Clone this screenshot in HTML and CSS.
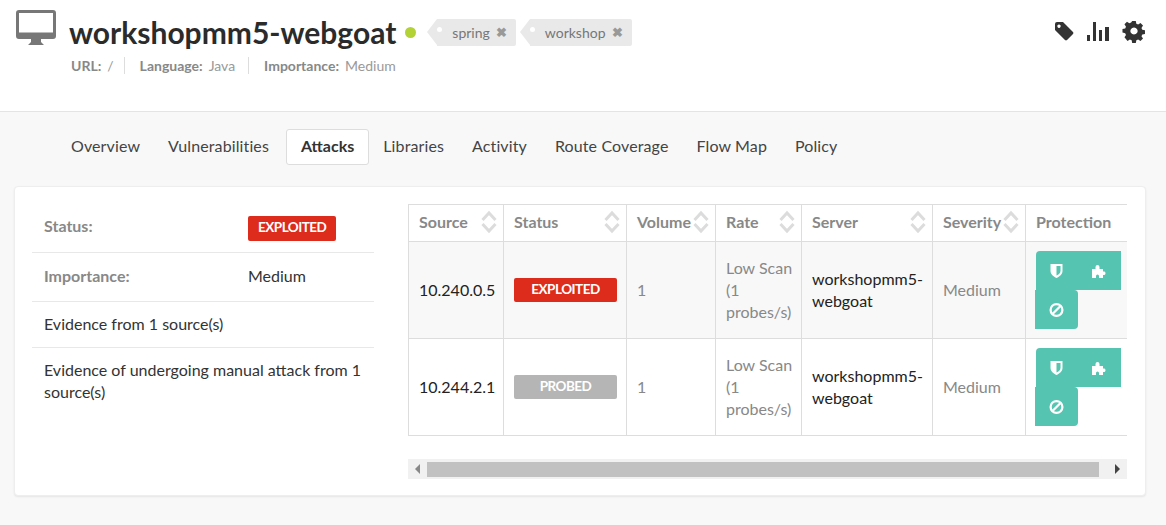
FILE: index.html
```html
<!DOCTYPE html>
<html lang="en">
<head>
<meta charset="UTF-8" />
<meta name="viewport" content="width=device-width, initial-scale=1" />
<title>workshopmm5-webgoat</title>
<link rel="stylesheet" href="styles.css">
</head>
<body>

<svg width="0" height="0" class="defs">
  <defs>
    <symbol id="sort" viewBox="0 0 16 24">
      <path d="M1.5 10 8 3l6.500 7" fill="none" stroke="#dcdcdc" stroke-width="3"/>
      <path d="M1.500 14 8 21l6.500-7" fill="none" stroke="#dcdcdc" stroke-width="3"/>
    </symbol>
    <symbol id="shield" viewBox="0 0 14 16">
      <path d="M1 1h12v7c0 3.500-3 5.500-6 7-3-1.500-6-3.500-6-7z" fill="#fff"/>
      <path d="M7 3h4v5c0 2-2 3.500-4 4.500z" fill="#55c4b0"/>
    </symbol>
    <symbol id="puzzle" viewBox="0 0 15 14">
      <path d="M0 5h3.500V3a2 2 0 0 1 4 0v2H11v2.500h1.500a2 2 0 0 1 0 3.500H11v3H7V12a1.500 1.500 0 0 0-3 0v2H0z" fill="#fff"/>
    </symbol>
    <symbol id="ban" viewBox="0 0 16 16">
      <circle cx="8" cy="8" r="6.300" fill="none" stroke="#fff" stroke-width="2.400"/>
      <path d="M4 12 12 4" stroke="#fff" stroke-width="2.400"/>
    </symbol>
  </defs>
</svg>

<header class="app-header">
  <div class="app-title">
    <svg class="monitor" viewBox="0 0 40 36" width="40" height="36">
      <path d="M3 0h34a3 3 0 0 1 3 3v23a3 3 0 0 1-3 3H25v3l3 3H12l3-3v-3H3a3 3 0 0 1-3-3V3a3 3 0 0 1 3-3z" fill="#777"/>
      <rect x="3" y="3" width="34" height="19.500" fill="#fff"/>
    </svg>
    <div>
      <div class="title-row">
        <h1>workshopmm5-webgoat</h1>
        <span class="dot"></span>
        <span class="tag">spring <b>&#10006;</b></span>
        <span class="tag">workshop <b>&#10006;</b></span>
      </div>
      <div class="meta">
        <span><b>URL:</b>/</span>
        <span><b>Language:</b>Java</span>
        <span><b>Importance:</b>Medium</span>
      </div>
    </div>
  </div>
  <div class="header-icons">
    <svg viewBox="0 0 20 20" width="20" height="20"><path d="M1 3a2 2 0 0 1 2-2h6l10 10a1.500 1.500 0 0 1 0 2l-6 6a1.500 1.500 0 0 1-2 0L1 9zm4 .500a1.700 1.700 0 1 0 .01 0z" fill="#333" fill-rule="evenodd"/></svg>
    <svg viewBox="0 0 22 22" width="22" height="22"><path d="M0 15h3v6H0zM6 2h3v19H6zM12 10h3v11h-3zM18 7h4v14h-4z" fill="#333"/></svg>
    <svg viewBox="0 0 24 24" width="24" height="24"><path d="M10 1h4l.6 3 2 .9 2.600-1.700 2.800 2.800-1.700 2.600.9 2 3 .6v4l-3 .6-.9 2 1.700 2.600-2.800 2.800-2.600-1.700-2 .9-.6 3h-4l-.6-3-2-.9-2.600 1.700L1.400 19l1.700-2.600-.9-2-3-.6v-4l3-.6.9-2L1.400 4.600l2.800-2.800 2.600 1.700 2-.9zM12 8a4 4 0 1 0 .01 0z" fill="#333" fill-rule="evenodd" transform="translate(1.200 1.200) scale(.9)"/></svg>
  </div>
</header>

<nav class="tabs">
  <a>Overview</a>
  <a>Vulnerabilities</a>
  <a class="active">Attacks</a>
  <a>Libraries</a>
  <a>Activity</a>
  <a>Route Coverage</a>
  <a>Flow Map</a>
  <a>Policy</a>
</nav>

<main class="card">
  <section class="summary">
    <div class="summary-row row-status"><b>Status:</b><span class="badge red">EXPLOITED</span></div>
    <div class="summary-row row-importance"><b>Importance:</b><span>Medium</span></div>
    <div class="summary-row row-text">Evidence from 1 source(s)</div>
    <div class="summary-row row-text last">Evidence of undergoing manual attack from 1 source(s)</div>
  </section>

  <section class="attacks">
    <div class="table-wrap">
      <table>
        <colgroup>
          <col class="c1"><col class="c2"><col class="c3"><col class="c4"><col class="c5"><col class="c6"><col class="c7">
        </colgroup>
        <thead>
          <tr>
            <th><div class="th-in">Source<svg><use href="#sort"/></svg></div></th>
            <th><div class="th-in">Status<svg><use href="#sort"/></svg></div></th>
            <th><div class="th-in">Volume<svg><use href="#sort"/></svg></div></th>
            <th><div class="th-in">Rate<svg><use href="#sort"/></svg></div></th>
            <th><div class="th-in">Server<svg><use href="#sort"/></svg></div></th>
            <th><div class="th-in">Severity<svg><use href="#sort"/></svg></div></th>
            <th>Protection</th>
          </tr>
        </thead>
        <tbody>
          <tr class="odd">
            <td class="dark">10.240.0.5</td>
            <td><span class="badge wide red">EXPLOITED</span></td>
            <td>1</td>
            <td class="rate">Low Scan<br>(1<br>probes/s)</td>
            <td class="dark">workshopmm5-webgoat</td>
            <td>Medium</td>
            <td class="protect">
              <div class="btns">
                <a class="first"><svg><use href="#shield"/></svg></a><a class="mid"><svg><use href="#puzzle"/></svg></a><a class="last"><svg><use href="#ban"/></svg></a>
              </div>
            </td>
          </tr>
          <tr>
            <td class="dark">10.244.2.1</td>
            <td><span class="badge wide grey">PROBED</span></td>
            <td>1</td>
            <td class="rate">Low Scan<br>(1<br>probes/s)</td>
            <td class="dark">workshopmm5-webgoat</td>
            <td>Medium</td>
            <td class="protect">
              <div class="btns">
                <a class="first"><svg><use href="#shield"/></svg></a><a class="mid"><svg><use href="#puzzle"/></svg></a><a class="last"><svg><use href="#ban"/></svg></a>
              </div>
            </td>
          </tr>
        </tbody>
      </table>
    </div>
    <div class="scrollbar">
      <span class="arrow left"></span>
      <div class="thumb"></div>
      <span class="arrow right"></span>
    </div>
  </section>
</main>

</body>
</html>
```

FILE: styles.css
```css
body {
  margin: 0;
  height: 525px;
  overflow: hidden;
  background-color: #f8f8f8;
  font-family: Lato, "Open Sans", sans-serif;
  font-size: 16px;
  color: #333;
}
.defs {
  display: block;
  height: 0;
}
.app-header {
  display: flex;
  justify-content: space-between;
  height: 111px;
  background-color: #fff;
  border-bottom: 1px solid #e4e4e4;
  box-sizing: content-box;
}
.app-title {
  display: flex;
  padding: 10px 0 0 16px;
}
.monitor {
  margin-right: 13px;
}
.title-row {
  display: flex;
  align-items: center;
  height: 44px;
}
h1 {
  margin: 0;
  font-size: 30px;
  font-weight: 700;
  color: #2b2b2b;
}
.dot {
  width: 11px;
  height: 11px;
  margin: 0 11px 0 9px;
  border-radius: 50%;
  background-color: #b3d235;
}
.tag {
  position: relative;
  display: flex;
  align-items: center;
  height: 27px;
  margin: 0 4px 0 10px;
  padding: 0 9px 0 15px;
  background-color: #e9e9e9;
  border-radius: 0 2px 2px 0;
  font-size: 14px;
  color: #777;
}
.tag::before {
  content: "";
  position: absolute;
  left: -10px;
  top: 0;
  border-right: 10px solid #e9e9e9;
  border-top: 13.5px solid transparent;
  border-bottom: 13.5px solid transparent;
}
.tag::after {
  content: "";
  position: absolute;
  left: 0;
  top: 8px;
  width: 5px;
  height: 5px;
  border-radius: 50%;
  background-color: #fff;
}
.tag b {
  margin-left: 6px;
  font-size: 13px;
  color: #999;
}
.meta {
  display: flex;
  margin-top: 3px;
  padding-left: 2px;
  font-size: 14px;
  color: #999;
}
.meta span {
  padding-right: 13px;
  margin-right: 15px;
  border-right: 1px solid #ddd;
}
.meta span:first-child {
  padding-right: 10px;
}
.meta span:last-child {
  border-right: none;
}
.meta b {
  margin-right: 6px;
  color: #888;
}
.header-icons {
  display: flex;
  align-items: center;
  gap: 13px;
  height: 20px;
  padding: 21px 20px 0 0;
}
.tabs {
  display: flex;
  padding: 17px 0 0 57px;
  height: 36px;
}
.tabs a {
  display: flex;
  align-items: center;
  padding: 0 13px 4px;
  font-size: 16px;
  letter-spacing: 0.12px;
  color: #444;
  border: 1px solid transparent;
  border-radius: 3px;
}
.tabs a.active {
  margin-left: 3px;
  padding: 0 14px 4px;
  background-color: #fff;
  border-color: #ddd;
  font-weight: 700;
  letter-spacing: 0;
  color: #333;
}
.card {
  display: flex;
  box-sizing: border-box;
  width: 1132px;
  height: 310px;
  margin: 21px 0 0 14px;
  padding: 18px 19px 0 17px;
  background-color: #fff;
  border: 1px solid #eee;
  border-radius: 4px;
  box-shadow: 0 1px 2px rgba(0, 0, 0, 0.08);
}
.summary {
  flex: none;
  width: 342px;
  margin-right: 34px;
}
.summary-row {
  display: flex;
  align-items: center;
  padding: 0 12px;
  border-bottom: 1px solid #e8e8e8;
}
.summary-row b {
  flex: none;
  width: 204px;
  color: #888;
}
.row-status {
  height: 47px;
}
.row-status b {
  margin-bottom: 7px;
}
.row-importance {
  padding-bottom: 3px;
  box-sizing: border-box;
  height: 49px;
}
.row-text {
  padding-bottom: 2px;
  box-sizing: border-box;
  height: 46px;
  line-height: 22px;
}
.row-text.last {
  display: block;
  height: auto;
  padding-top: 11px;
  border-bottom: none;
}
.badge {
  display: inline-block;
  padding: 0 10px;
  height: 25px;
  line-height: 23px;
  border-radius: 2px;
  font-size: 13.5px;
  font-weight: 700;
  letter-spacing: -0.5px;
  color: #fff;
  box-sizing: border-box;
}
.badge.wide {
  display: block;
  width: 103px;
  height: 24px;
  padding: 0;
  text-align: center;
  line-height: 22px;
}
.red {
  background-color: #dd2c1c;
}
.grey {
  background-color: #b5b5b5;
}
.attacks {
  width: 719px;
  flex: none;
}
.table-wrap {
  width: 719px;
  overflow: hidden;
  margin-top: -1px;
}
table {
  table-layout: fixed;
  width: 740px;
  border-collapse: collapse;
}
.c1 { width: 95px; }
.c2 { width: 123px; }
.c3 { width: 89px; }
.c4 { width: 86px; }
.c5 { width: 131px; }
.c6 { width: 93px; }
.c7 { width: 123px; }
th, td {
  padding: 0 10px;
  border: 1px solid #ddd;
  text-align: left;
  font-size: 16px;
  line-height: 22px;
  color: #888;
}
th {
  height: 37px;
  padding-bottom: 3px;
  box-sizing: border-box;
  font-weight: 700;
}
td {
  height: 96px;
}
.odd td {
  background-color: #f8f8f8;
}
td.dark {
  color: #222;
}
td.rate {
  white-space: nowrap;
}
.th-in {
  display: flex;
  align-items: center;
  justify-content: space-between;
}
.th-in svg {
  flex: none;
  width: 16px;
  height: 24px;
  margin-right: -4px;
}
td.protect {
  padding: 0 0 0 9px;
}
.btns {
  display: flex;
  flex-wrap: wrap;
  width: 90px;
}
.btns a {
  display: flex;
  align-items: center;
  justify-content: center;
  box-sizing: border-box;
  width: 43px;
  height: 39px;
  background-color: #55c4b0;
}
.btns svg {
  width: 15px;
  height: 16px;
}
.btns .first {
  margin-left: 1px;
  padding-right: 2px;
  border-radius: 4px 0 0 0;
}
.btns .mid {
  width: 42px;
  margin-right: 4px;
  padding-right: 2px;
}
.btns .last {
  border-radius: 0 4px 4px 0;
}
.scrollbar {
  display: flex;
  align-items: center;
  height: 20px;
  margin-top: 23px;
  padding: 2px 0;
  box-sizing: border-box;
  background-color: #f1f1f1;
}
.arrow {
  flex: none;
  width: 19px;
  display: flex;
  justify-content: center;
}
.arrow.right {
  width: 28px;
  padding-left: 8px;
  box-sizing: border-box;
  margin-left: auto;
}
.arrow::before {
  content: "";
  border-top: 5px solid transparent;
  border-bottom: 5px solid transparent;
}
.arrow.left::before {
  border-right: 5px solid #888;
}
.arrow.right::before {
  border-left: 5px solid #444;
}
.thumb {
  flex: 1;
  height: 15px;
  background-color: #c1c1c1;
}
```
